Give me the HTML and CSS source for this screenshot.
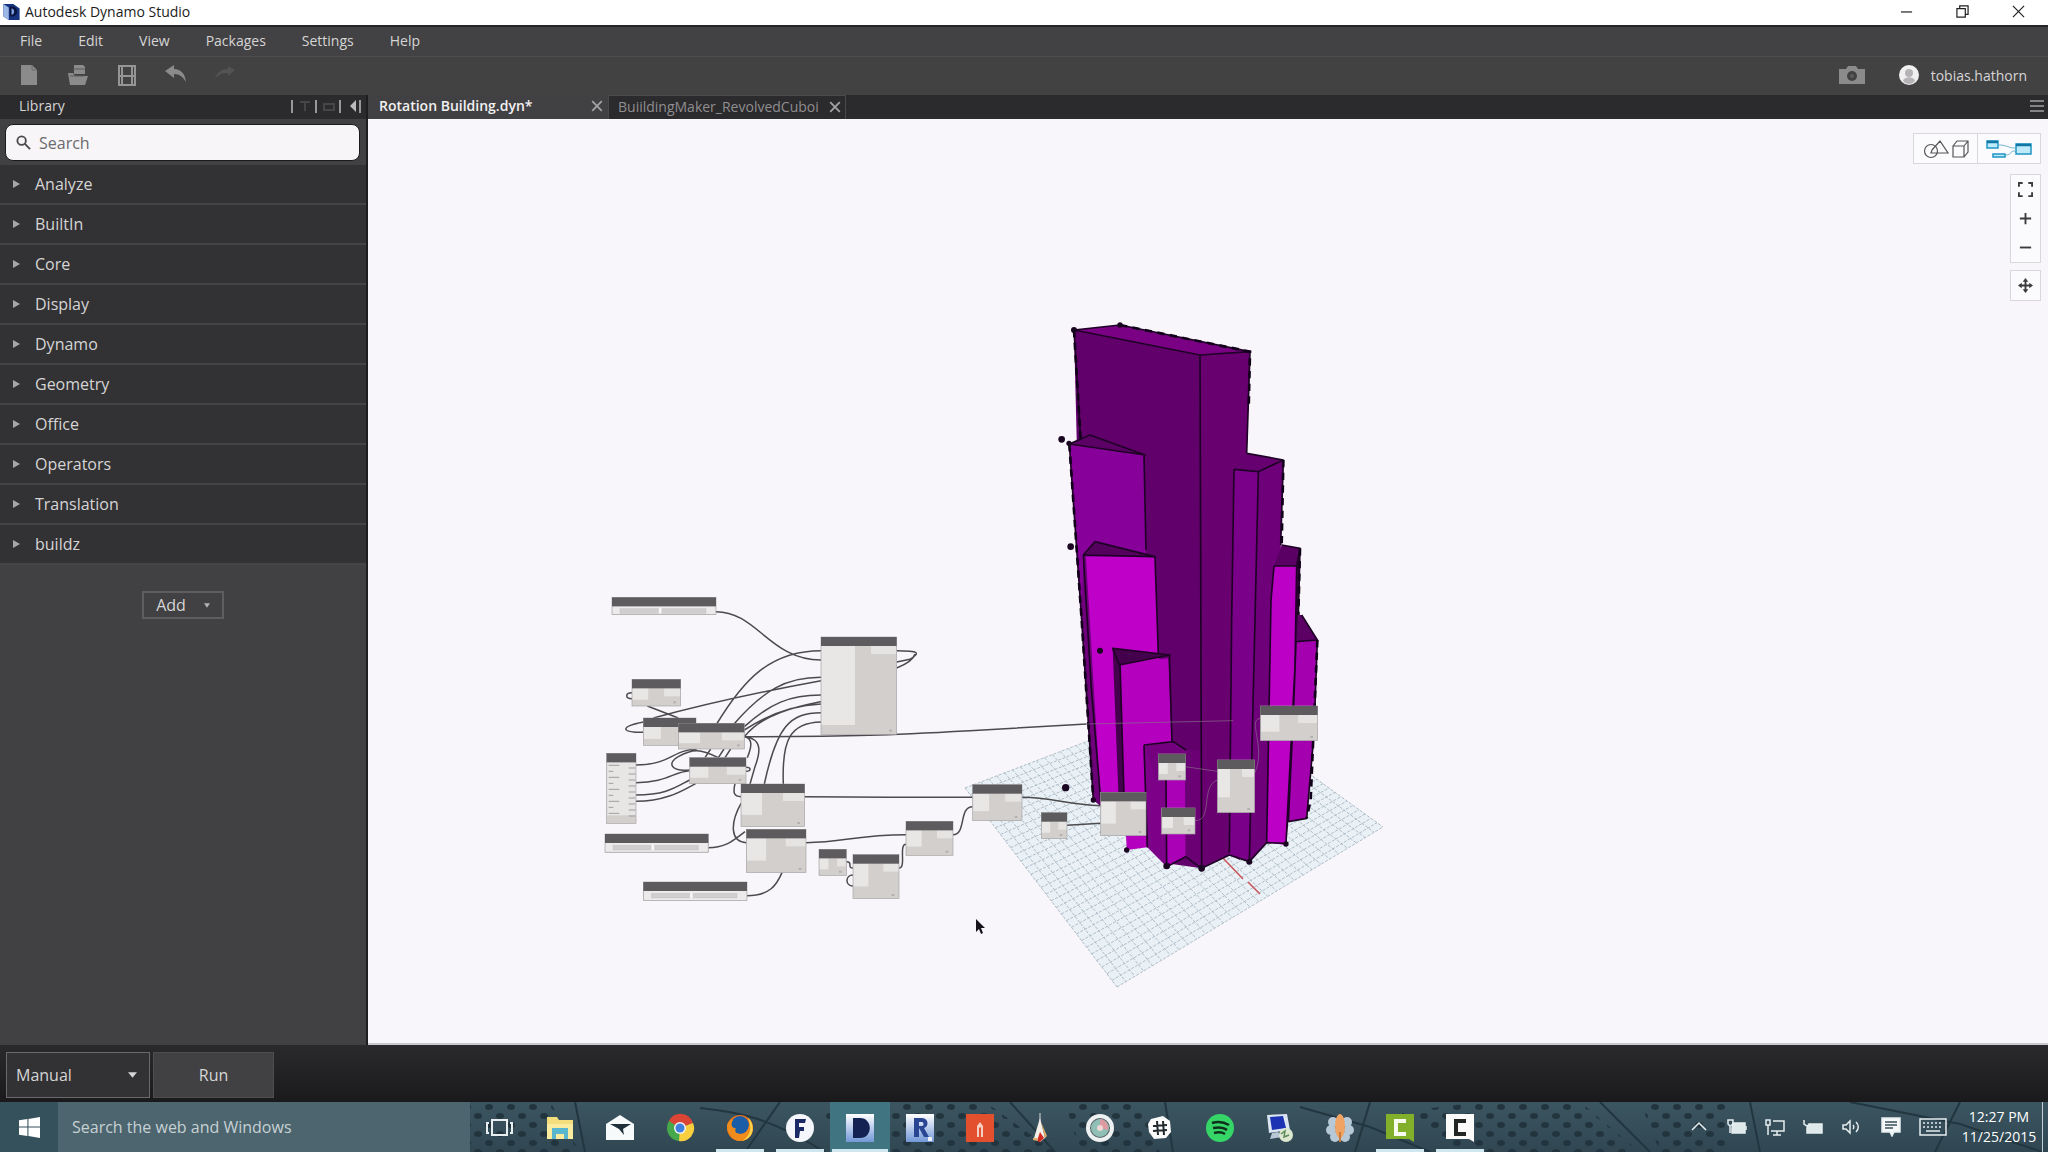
FILE: index.html
```html
<!DOCTYPE html>
<html lang="en">
<head>
<meta charset="UTF-8" />
<meta name="viewport" content="width=device-width, initial-scale=1.0"/>
<title>Autodesk Dynamo Studio</title>
<link rel="stylesheet" href="styles.css">
</head>
<body>

<header class="titlebar">
  <svg class="app-logo" viewBox="0 0 20 20"><path d="M1 1h11l7 5v13H7L1 15z" fill="#16337f"/><path d="M1 1v14l6 4V5z" fill="#9db8e6"/><path d="M8 4h3c7 0 7 11 0 11H8z" fill="#0a1440"/><path d="M10 6c4 0 4 7 0 7z" fill="#7fa0e0"/></svg>
  <h1>Autodesk Dynamo Studio</h1>
  <div class="window-buttons">
    <button aria-label="Minimize"><svg viewBox="0 0 14 14"><path d="M1 7.5h12"/></svg></button>
    <button aria-label="Restore"><svg viewBox="0 0 14 14"><path d="M1 4h9v9H1zM4 4V1h9v9h-3"/></svg></button>
    <button aria-label="Close"><svg viewBox="0 0 14 14"><path d="M1 1l12 12M13 1L1 13"/></svg></button>
  </div>
</header>

<nav class="menubar">
  <button>File</button>
  <button>Edit</button>
  <button>View</button>
  <button>Packages</button>
  <button>Settings</button>
  <button>Help</button>
</nav>

<div class="toolbar">
  <button aria-label="New"><svg viewBox="0 0 24 24"><path d="M4 2h11l5 5v15H4z" fill="#8c8b8c"/><path d="M15 2v5h5" fill="none" stroke="#6b6a6b"/></svg></button>
  <button aria-label="Open"><svg viewBox="0 0 24 24"><path d="M8 2h9l2 2v7H8zM2 10h5l2 3h13l-3 9H4z" fill="#8c8b8c"/><path d="M7 6h12M4 13h14" stroke="#5d5c5d"/></svg></button>
  <button aria-label="Save"><svg viewBox="0 0 24 24"><path d="M4 3h16v19H4zM4 13h16M7 3v19M17 3v19" fill="none" stroke="#969596" stroke-width="2"/></svg></button>
  <button aria-label="Undo"><svg viewBox="0 0 24 24"><path d="M1 8l9-6v4c7 0 11 5 12 13-3-5-6-8-12-8v4z" fill="#8c8b8c"/></svg></button>
  <button aria-label="Redo"><svg viewBox="0 0 24 24"><path d="M22 7l-7-4v3C8 6 4 9 2 16c4-5 7-6 13-6v3z" fill="#545354"/></svg></button>
  <div class="account">
    <button aria-label="Export as image"><svg viewBox="0 0 26 20"><path d="M0 4h7l2-3h8l2 3h7v15H0z" fill="#8c8b8c"/><circle cx="13" cy="11" r="5" fill="#434243"/><circle cx="13" cy="11" r="2" fill="#5d5c5d"/></svg></button>
    <button class="user"><svg viewBox="0 0 20 20"><circle cx="10" cy="10" r="10" fill="#f1f0f1"/><circle cx="10" cy="8" r="4" fill="#b5b3b5"/><path d="M4 16c1-5 11-5 12 0-3 4-9 4-12 0z" fill="#b5b3b5"/></svg><span>tobias.hathorn</span></button>
  </div>
</div>

<main class="workspace">
  <aside class="library">
    <div class="library-head">
      <h2>Library</h2>
      <svg viewBox="0 0 72 16"><path d="M2 2v13M26 2v13M50 2v13M70 2v13" stroke="#bdbcbd" stroke-width="1.5"/><path d="M10 4h10M15 4v9M34 6h10v6H34z" stroke="#464547" stroke-width="2" fill="none"/><path d="M66 2v12l-6-6z" fill="#bdbcbd"/></svg>
    </div>
    <label class="search">
      <svg viewBox="0 0 16 16"><circle cx="6" cy="6" r="4.5"/><path d="M9.5 9.5L15 15"/></svg>
      <input type="text" placeholder="Search" aria-label="Search library">
    </label>
    <ul class="categories">
      <li><button>Analyze</button></li>
      <li><button>BuiltIn</button></li>
      <li><button>Core</button></li>
      <li><button>Display</button></li>
      <li><button>Dynamo</button></li>
      <li><button>Geometry</button></li>
      <li><button>Office</button></li>
      <li><button>Operators</button></li>
      <li><button>Translation</button></li>
      <li><button>buildz</button></li>
    </ul>
    <button class="add">Add <svg viewBox="0 0 8 6"><path d="M0 0h8L4 6z"/></svg></button>
  </aside>

  <section class="editor">
    <div class="tabs">
      <div class="tab active"><button class="name">Rotation Building.dyn*</button><button class="close" aria-label="Close tab"><svg viewBox="0 0 10 10"><path d="M1 1l8 8M9 1L1 9"/></svg></button></div>
      <div class="tab"><button class="name">BuiildingMaker_RevolvedCuboi</button><button class="close" aria-label="Close tab"><svg viewBox="0 0 10 10"><path d="M1 1l8 8M9 1L1 9"/></svg></button></div>
      <button class="tab-list" aria-label="All tabs"><svg viewBox="0 0 14 12"><path d="M0 1h14M0 6h14M0 11h14"/></svg></button>
    </div>

    <div class="canvas">
      <svg class="scene" viewBox="368 119 1680 926" preserveAspectRatio="xMidYMid meet">
        <!-- ground plane -->
        <polygon points="965,788 1203,697 1383,827 1117,987" fill="#e9f1f6"/>
        <g id="grid"></g>
        <path d="M1223 858l20 21M1248 882l12 12" stroke="#c9565a" stroke-width="1.6"/>

        <!-- tower -->
        <g class="tower" transform="translate(1040 300) scale(.33333)">
          <polygon points="102,90 480,165 485,1705 380,1690 160,1500 122,900" fill="#61006a"/>
          <polygon points="480,165 630,155 620,480 600,1680 568,1665 485,1705" fill="#68006f"/>
          <polygon points="102,90 240,75 630,155 480,165" fill="#7a0084"/>

          <polygon points="582,508 655,515 645,960 628,1685 568,1665 575,960" fill="#7b0089"/>
          <polygon points="655,515 730,480 722,760 693,900 680,1628 628,1685 645,960" fill="#6e007a"/>
          <polygon points="620,460 730,480 655,515 582,508" fill="#660070"/>

          <polygon points="770,800 780,745 775,1000 768,1200 745,1565 738,1635" fill="#3c0045"/>
          <polygon points="702,798 770,800 764,1100 738,1635 680,1628 693,900" fill="#bd00c6"/>
          <polygon points="725,735 780,745 770,800 702,798" fill="#5a0064"/>
          <polygon points="768,1025 832,1020 822,1300 800,1555 745,1565 760,1250" fill="#a500b0"/>
          <polygon points="775,945 785,945 832,1020 768,1025" fill="#5c0066"/>

          <polygon points="88,432 312,465 318,760 250,1480 160,1500 125,960" fill="#87009a"/>
          <polygon points="88,432 150,405 315,465" fill="#5b0064"/>
          <polygon points="130,765 138,770 182,1500 160,1500 125,960" fill="#6e007a"/>
          <polygon points="138,770 345,772 355,1060 390,1330 245,1480 182,1500" fill="#be00c8"/>
          <polygon points="130,765 165,725 345,770" fill="#55005e"/>
          <polygon points="218,1045 240,1090 252,1500 235,1475" fill="#44004c"/>
          <polygon points="240,1090 385,1075 395,1330 322,1642 260,1650 252,1475" fill="#b400be"/>
          <polygon points="218,1045 390,1065 238,1095" fill="#45004d"/>
          <polygon points="312,1340 378,1390 380,1700 322,1642" fill="#7c0088"/>
          <polygon points="378,1390 435,1370 437,1670 380,1700" fill="#aa00b6"/>
          <polygon points="437,1350 485,1350 485,1705 437,1670" fill="#6a0074"/>
          <polygon points="312,1335 400,1325 438,1350 438,1440 350,1440" fill="#740080"/>

          <path class="edges" d="M102 90l138-15 390 80-150 10zM480 165l5 1540M630 155l-10 305M102 90l20 330M388 1065l8 260M355 1060l-10-290M312 465l6 285M88 432l37 528 35 540M582 508l-7 450-7 700M655 515l-10 445-17 725M693 900l-13 725M702 798l-9 102M770 800l-5 300-27 530M832 1020l-10 280-22 255-55 10M768 1025l-8 220-15 320M130 765l24 400 28 335M312 1335l10 307M378 1440l2 260M620 460l110 20-8 255M582 508l73 7 75-35M725 735l55 10-5 200M702 798h68l10-53M785 945l47 75-64 5M88 432l62-27 165 60zM130 765l35-40 180 45zM218 1045l172 20-152 30zM312 1335l88-10 38 25M240 1090l12 400M380 1700l57-30 48 35 83-40 60 20 52-57 58 2"/>
          <path class="dashes" d="M102 90l20 330M88 432l37 528 35 540M240 75l390 80-4 170M730 480l-5 255M780 745l-5 200M832 1020l-20 480-12 55"/>
          <g fill="#1a0620">
            <circle cx="102" cy="90" r="9"/><circle cx="240" cy="75" r="8"/><circle cx="65" cy="418" r="10"/><circle cx="87" cy="430" r="8"/><circle cx="92" cy="740" r="10"/><circle cx="180" cy="1052" r="9"/><circle cx="77" cy="1463" r="11"/>
            <circle cx="160" cy="1500" r="8"/><circle cx="260" cy="1650" r="8"/><circle cx="380" cy="1698" r="10"/><circle cx="485" cy="1705" r="10"/><circle cx="628" cy="1685" r="9"/><circle cx="738" cy="1632" r="8"/>
          </g>
        </g>

        <!-- node graph -->
        <g transform="translate(590 580) scale(.33333)">
          <g class="wires">
            <path d="M378 95C500 95 540 240 693 240M380 432C460 300 540 212 693 212M432 432C520 330 590 292 693 292M190 414C350 370 540 330 693 302M463 440C540 370 600 345 693 345M463 450C540 400 620 375 693 372M463 470C520 400 620 380 693 365M523 612C560 440 600 398 693 398M580 612C575 480 600 428 693 426"/>
            <path d="M920 212C990 212 990 218 960 238L920 246M975 222C970 240 940 256 920 264M126 338C105 338 105 356 126 356M172 378L265 414M160 426C90 440 90 457 160 457"/>
            <path d="M138 555C240 555 250 508 320 508M138 608C230 608 250 575 299 572M138 645C230 645 260 620 299 600M138 664C230 664 280 630 318 610M299 570C235 575 235 545 265 530C310 505 330 507 385 533M345 533L362 507M385 533L402 507M405 533L422 507"/>
            <path d="M463 470C490 475 485 500 472 533M463 470C520 475 510 520 495 560L480 612M468 562C484 562 484 574 468 574M435 611C428 640 433 650 453 650M453 670C420 730 420 785 469 788M355 803C410 803 430 780 465 755M471 947C540 947 560 915 576 878M463 470C800 470 900 465 1140 452L1490 432"/>
            <path d="M644 650L900 652H1148M648 788C760 788 800 764 948 764M769 845C790 845 770 864 789 864M789 885C765 885 765 918 789 918M927 864C950 864 925 793 948 793M1089 764C1130 764 1105 680 1148 680M1296 652C1390 652 1430 675 1532 677M1431 736L1532 730"/>
            <path d="M1490 432L1930 422M1785 560L1882 574M1816 722C1870 722 1830 620 1882 600M1994 580C2030 500 1970 420 2011 415" stroke="#86708a" stroke-width="2"/>
          </g>
          <g id="nodes"></g>
        </g>

        <path d="M976 919v13l3-3 2 5 2-1-2-5h4z" fill="#16141a"/>
      </svg>

      <div class="canvas-tools">
        <div class="view-switch">
          <button aria-label="Geometry view"><svg viewBox="0 0 46 20" fill="none" stroke="#555" stroke-width="1.2"><circle cx="8" cy="12" r="6.5"/><path d="M9 11l8-9 8 12H8zM30 7h11v11H30zM30 7l4-5h11v11l-4 5M41 7l4-5"/></svg></button>
          <button aria-label="Graph view"><svg viewBox="0 0 46 20"><path d="M1 2h11v7H1zM30 5h15v10H30zM7 15h12v3H7z" fill="#bfeafa" stroke="#1f95c4" stroke-width="1.5"/><path d="M1 3h11M30 6h15" stroke="#0f77a6" stroke-width="2.5"/><path d="M13 6c8 0 9 3 16 3M20 16c5 0 4-4 9-4" fill="none" stroke="#6fb4cf"/></svg></button>
        </div>
        <div class="nav-group">
          <button aria-label="Zoom to fit"><svg viewBox="0 0 16 16"><path d="M1 5V1h4M11 1h4v4M15 11v4h-4M5 15H1v-4"/></svg></button>
          <button aria-label="Zoom in"><svg viewBox="0 0 16 16"><path d="M2 8h12M8 2v12"/></svg></button>
          <button aria-label="Zoom out"><svg viewBox="0 0 16 16"><path d="M2 8h12"/></svg></button>
        </div>
        <div class="nav-group">
          <button aria-label="Pan"><svg viewBox="0 0 16 16"><path d="M2 8h12M8 2v12"/><path d="M8 0l3 4H5zM8 16l3-4H5zM0 8l4-3v6zM16 8l-4-3v6z" class="solid"/></svg></button>
        </div>
      </div>
    </div>
  </section>
</main>

<div class="runbar">
  <div class="run-mode">
    <select aria-label="Run mode"><option>Manual</option><option>Automatic</option></select>
    <svg viewBox="0 0 10 6"><path d="M0 0h10L5 6z"/></svg>
  </div>
  <button class="run">Run</button>
</div>

<footer class="taskbar">
  <svg class="wallpaper" width="100%" height="100%">
    <defs>
      <pattern id="dots" width="22" height="18" patternUnits="userSpaceOnUse"><ellipse cx="5" cy="5" rx="4" ry="3"/><ellipse cx="16" cy="14" rx="4" ry="3"/></pattern>
    </defs>
    <g fill="url(#dots)"><path d="M470 0h80l30 50H470zM815 10l60-10h110l70 50H850zM1065 0h75l20 50h-80zM1400 10l80-10h100l60 50H1460zM1640 0h85v50h-65z"/></g>
    <path d="M575 0l10 50M700 6c40 4 70 10 125 44M780 0l-35 50M1010 0l45 50M1165 0l8 50M1300 5l70 20 60 25M1370 0l-15 50M1600 0l50 50M1750 0l10 50M1850 0l110 22 88 30M1960 0l-25 50"/>
  </svg>
  <button class="start" aria-label="Start"><svg viewBox="0 0 20 20"><path d="M0 3l8-1v7H0zM9 2l11-2v9H9zM0 10h8v8l-8-1zM9 10h11v10L9 18z" fill="#fff"/></svg></button>
  <input class="web-search" type="text" placeholder="Search the web and Windows" aria-label="Search the web and Windows">
  <div class="apps">
    <button aria-label="Task view"><svg viewBox="0 0 30 30"><path d="M7 7h15v15H7zM4 10H2v10h2M25 10h2v10h-2" fill="none" stroke="#e8eef0" stroke-width="2"/></svg></button>
    <button aria-label="File Explorer"><svg viewBox="0 0 30 30"><path d="M2 4h10l2 3h14v19H2z" fill="#f3dd7c"/><path d="M2 11h26v15H2z" fill="#faeb9e"/><path d="M7 26V15h16v11h-4v-5h-8v5z" fill="#58b6cf"/></svg></button>
    <button aria-label="Mail"><svg viewBox="0 0 30 30"><path d="M1 11L15 2l14 9v16H1z" fill="#f7fafb"/><path d="M5 11h21l-8 5 1 6-5-6z" fill="#20303a"/></svg></button>
    <button aria-label="Chrome"><svg viewBox="0 0 30 30"><circle cx="15" cy="15" r="13" fill="#46a84a"/><path d="M15 15L4 8a13 13 0 0 1 24 2z" fill="#dc4436"/><path d="M15 15l13-5a13 13 0 0 1-14 18z" fill="#f8cf3e"/><circle cx="15" cy="15" r="6" fill="#f2f2f2"/><circle cx="15" cy="15" r="4.5" fill="#3f7fe0"/></svg></button>
    <button class="open" aria-label="Firefox"><svg viewBox="0 0 30 30"><circle cx="15" cy="15" r="13" fill="#e8761c"/><circle cx="15" cy="12" r="9" fill="#1c5da8"/><path d="M2 12c0 9 6 16 13 16 9 0 13-7 13-13 0-5-3-9-5-10 3 9-1 16-7 16-5 0-7-3-5-6-4 1-6-4-3-8-3 0-5 2-6 5z" fill="#f08c1c"/><path d="M23 5c5 4 6 12 3 17-2 3-5 5-9 6 9-5 10-14 6-23z" fill="#fbd24b"/></svg></button>
    <button class="open" aria-label="FormIt"><svg viewBox="0 0 30 30"><circle cx="15" cy="15" r="14" fill="#f4f6fb"/><path d="M10 6h11l-1 4h-6v4h5v4h-4l-1 7h-4z" fill="#1b2a66"/></svg></button>
    <button class="open current" aria-label="Dynamo Studio"><svg viewBox="0 0 30 30"><defs><linearGradient id="blue" x2="0" y2="1"><stop stop-color="#fff"/><stop offset="1" stop-color="#7398d8"/></linearGradient></defs><path d="M1 1h28v28H1z" fill="url(#blue)"/><path d="M8 5h7c13 0 13 20 0 20H8z" fill="#132252"/></svg></button>
    <button aria-label="Revit"><svg viewBox="0 0 30 30"><path d="M1 1h28v28H1z" fill="url(#blue)"/><path d="M9 5h8c7 0 7 9 2 10l5 9h-5l-5-9v9H9zM14 9v4h3c2 0 2-4 0-4z" fill="#2a4692" fill-rule="evenodd"/><path d="M23 24h4v4h-4z" fill="#eef2fa"/></svg></button>
    <button aria-label="Navigator"><svg viewBox="0 0 30 30"><path d="M1 1h28v28H1z" fill="#e2502e"/><path d="M12 24V13l3-4 3 4v11h-2V14l-2 1v9z" fill="#f4cfc2"/></svg></button>
    <button aria-label="Rocket"><svg viewBox="0 0 30 30"><path d="M15 0v8" stroke="#d7dadd"/><path d="M15 5l5 20-5 4-6-4z" fill="#f4efe8"/><path d="M15 19l4 6-4 4-3-1z" fill="#d12a20"/><path d="M8 25h4l1 3-5-1zM16 9l4 16 2-2z" fill="#dfae6b"/></svg></button>
    <button aria-label="Camera"><svg viewBox="0 0 30 30"><circle cx="15" cy="15" r="14" fill="#eef1f1"/><circle cx="15" cy="15" r="10" fill="#596468"/><circle cx="15" cy="15" r="9" fill="#8fbfb5"/><path d="M15 6a9 9 0 0 1 8 11l-8-2z" fill="#dd9aa0"/><circle cx="15" cy="15" r="3" fill="#f1d6d6"/></svg></button>
    <button aria-label="Slack"><svg viewBox="0 0 30 30"><path d="M6 6l12-3 7 5 1 11-5 6-12 1-5-7-1-8z" fill="#fbfbfb"/><path d="M12 8l1 14M18 8l1 14M8 13l14-1M8 18l14-1" stroke="#22292d" stroke-width="2"/></svg></button>
    <button aria-label="Spotify"><svg viewBox="0 0 30 30"><circle cx="15" cy="15" r="14" fill="#35d567"/><path d="M7 10c6-2 12-1 17 2M8 15c5-1 10-1 14 2M9 20c4-1 8-1 11 1" fill="none" stroke="#10301c" stroke-width="2.5"/></svg></button>
    <button aria-label="Remote Desktop"><svg viewBox="0 0 30 30"><path d="M2 2l20-1 3 16-21 3z" fill="#dce6f2"/><path d="M5 4l13-1 3 12-14 2z" fill="#1c34b4"/><path d="M7 20l6-1 4 5-12 2z" fill="#b8c6d6"/><circle cx="21" cy="22" r="7" fill="#dbe7cf"/><path d="M16 21l4-3-1 6 5-2" fill="none" stroke="#5d8a58" stroke-width="1.5"/></svg></button>
    <button aria-label="Flower"><svg viewBox="0 0 30 30"><g fill="#b7c8d6"><circle cx="8" cy="9" r="5"/><circle cx="22" cy="9" r="5"/><circle cx="6" cy="17" r="5"/><circle cx="24" cy="17" r="5"/><circle cx="10" cy="24" r="5"/><circle cx="20" cy="24" r="5"/></g><ellipse cx="15" cy="13" rx="5" ry="12" fill="#f0a362"/><path d="M15 19v10" stroke="#c87a3c" stroke-width="2"/></svg></button>
    <button class="open" aria-label="Camtasia"><svg viewBox="0 0 30 30"><path d="M1 1h28v28l-5-3H1z" fill="#83b02b"/><path d="M21 8H11v13h10" fill="none" stroke="#f7faef" stroke-width="4"/></svg></button>
    <button class="open" aria-label="Camtasia Recorder"><svg viewBox="0 0 30 30"><path d="M1 1h28v28l-5-3H1z" fill="#fbfcfa"/><path d="M21 8H11v13h10" fill="none" stroke="#222724" stroke-width="4"/></svg></button>
  </div>
  <div class="tray">
    <button aria-label="Show hidden icons"><svg viewBox="0 0 20 20"><path d="M3 13l7-7 7 7"/></svg></button>
    <button aria-label="Power"><svg viewBox="0 0 20 20"><path d="M6 6h12v10H5v-5z" fill="#dfe8ea"/><path d="M1 3v4l2 2 3-2V3zM3 9v7M19 9v4"/></svg></button>
    <button aria-label="Display"><svg viewBox="0 0 20 20"><path d="M8 4h11v10H6M12 14v4M8 18h8M1 3h4v5H1zM3 8v10"/></svg></button>
    <button aria-label="Drive"><svg viewBox="0 0 20 20"><path d="M6 7h13v9H4v-5z" fill="#dfe8ea"/><path d="M1 3v4l3 2 3-2"/></svg></button>
    <button aria-label="Volume"><svg viewBox="0 0 20 20"><path d="M2 8h3l4-4v12l-4-4H2zM12 8c1 1 1 3 0 4M15 5c3 3 3 7 0 10"/></svg></button>
    <button class="notify" aria-label="Notifications"><svg viewBox="0 0 20 20"><path d="M1 1h18v14h-6l-2 4-2-4H1z" fill="#f4f8f9"/><path d="M4 5h12M4 8h12M4 11h8" stroke="#3a4f59"/></svg></button>
    <button class="keyboard" aria-label="Touch keyboard"><svg viewBox="0 0 28 20"><path d="M1 2h26v16H1z"/><path d="M4 6h20M4 10h20" stroke-dasharray="2 2"/><path d="M7 14h14"/></svg></button>
    <time class="clock"><span>12:27 PM</span><span>11/25/2015</span></time>
  </div>
</footer>

<script src="script.js"></script>
</body>
</html>
```
FILE: styles.css
```css
* {
  box-sizing: border-box;
}

body {
  margin: 0;
  height: 100vh;
  display: flex;
  flex-direction: column;
  overflow: hidden;
  background: #414042;
  color: #d6d5d6;
  font-family: "Open Sans", "Noto Sans", sans-serif;
  font-size: 16px;
}

button, input, select {
  font: inherit;
  color: inherit;
  background: none;
  border: 0;
  padding: 0;
  margin: 0;
}

button {
  display: flex;
  align-items: center;
  justify-content: center;
  cursor: pointer;
}

h1, h2 {
  margin: 0;
  font-weight: 400;
}

svg {
  display: block;
  flex: none;
}

/* title bar */

.titlebar {
  flex: none;
  display: flex;
  align-items: center;
  height: 25px;
  padding: 0 2px 2px;
  background: #fff;
  color: #1c1c1c;
}

.app-logo {
  width: 19px;
  height: 18px;
  margin-right: 4px;
}

.titlebar h1 {
  font-size: 14px;
  line-height: 22px;
}

.window-buttons {
  display: flex;
  margin-left: auto;
}

.window-buttons button {
  width: 56px;
  height: 22px;
}

.window-buttons svg {
  width: 13px;
  height: 13px;
  fill: none;
  stroke: #222;
  stroke-width: 1.3;
}

/* menus */

.menubar {
  flex: none;
  display: flex;
  gap: 36px;
  height: 31px;
  padding: 0 20px 3px;
  border-top: 2px solid #262527;
  background: #424143;
  font-size: 14px;
}

.toolbar {
  flex: none;
  display: flex;
  align-items: center;
  gap: 25px;
  height: 39px;
  padding: 0 21px 2px 17px;
  border-top: 1px solid #4e4d4f;
  background: #434243;
}

.toolbar svg {
  width: 24px;
  height: 24px;
}

.account {
  display: flex;
  align-items: center;
  gap: 34px;
  margin-left: auto;
  font-size: 14px;
}

.account svg {
  width: 26px;
  height: 20px;
}

.account .user {
  gap: 12px;
}

.account .user svg {
  width: 20px;
}

/* library */

.workspace {
  flex: 1;
  min-height: 0;
  display: flex;
}

.library {
  flex: none;
  width: 368px;
  border-right: 2px solid #1e1d1f;
}

.library-head {
  display: flex;
  align-items: center;
  justify-content: space-between;
  height: 24px;
  padding: 0 4px 2px 19px;
  background: #2b2a2c;
}

.library-head h2 {
  font-size: 14px;
  line-height: 22px;
}

.library-head svg {
  width: 72px;
  height: 16px;
}

.search {
  display: flex;
  align-items: center;
  gap: 8px;
  height: 37px;
  margin: 5px 6px 4px 5px;
  padding: 0 10px;
  border: 1px solid #1b1a1c;
  border-radius: 8px;
  background: #f7f5f8;
}

.search svg {
  width: 15px;
  height: 15px;
  fill: none;
  stroke: #4a494b;
  stroke-width: 2;
}

.search input {
  flex: 1;
  outline: none;
  color: #333;
}

.search input::placeholder {
  color: #6b6a6c;
  opacity: 1;
}

.categories {
  margin: 0;
  padding: 0;
  list-style: none;
}

.categories button {
  justify-content: flex-start;
  gap: 15px;
  width: 100%;
  height: 40px;
  padding-left: 13px;
  border-bottom: 2px solid #454446;
  background: #323133;
}

.categories button::before {
  content: "";
  border-left: 7px solid #a9a8a9;
  border-top: 4px solid transparent;
  border-bottom: 4px solid transparent;
}

.add {
  gap: 18px;
  width: 82px;
  height: 28px;
  margin: 26px auto 0;
  border: 2px solid #5e5d5f;
}

.add svg {
  width: 6px;
  height: 5px;
  fill: #b5b4b5;
}

/* tabs */

.editor {
  flex: 1;
  min-width: 0;
  display: flex;
  flex-direction: column;
}

.tabs {
  flex: none;
  display: flex;
  height: 24px;
  background: #2b2a2c;
}

.tab {
  display: flex;
  align-items: center;
  justify-content: space-between;
  width: 238px;
  padding: 0 4px 2px 9px;
  border: 1px solid #4a494b;
  border-bottom: 0;
  color: #8f8e90;
  font-size: 14px;
}

.tab.active {
  width: 240px;
  padding: 0 4px 4px 10px;
  background: #414042;
  border-color: #414042;
  color: #f2f1f2;
  font-weight: 600;
}

.tab svg {
  width: 12px;
  height: 12px;
  fill: none;
  stroke: #a3a2a4;
  stroke-width: 1.5;
}

.tab-list {
  margin-left: auto;
  padding: 0 4px 2px 0;
}

.tab-list svg {
  width: 14px;
  height: 12px;
  stroke: #a3a2a4;
  stroke-width: 1.5;
}

/* canvas */

.canvas {
  flex: 1;
  min-height: 0;
  position: relative;
  background: #f8f6fa;
  box-shadow: inset 0 -2px #c9c8ca;
}

.scene {
  width: 100%;
  height: 100%;
}

#grid path {
  fill: none;
  stroke: #a0aebb;
  stroke-width: 0.8;
  stroke-dasharray: 3 1.5;
}

.edges {
  fill: none;
  stroke: #1f0026;
  stroke-width: 5;
  stroke-linejoin: round;
}

.dashes {
  fill: none;
  stroke: #12001a;
  stroke-width: 8;
  stroke-dasharray: 22 16;
}

.wires {
  fill: none;
  stroke: #4c4a4d;
  stroke-width: 4.5;
}

.canvas-tools {
  position: absolute;
  top: 14px;
  right: 7px;
  display: flex;
  flex-direction: column;
  align-items: flex-end;
}

.view-switch,
.nav-group {
  display: flex;
  border: 1px solid #d9d7db;
  background: #fbfafc;
}

.view-switch button {
  width: 63px;
  height: 29px;
}

.view-switch button + button {
  border-left: 1px solid #d9d7db;
}

.view-switch svg {
  width: 46px;
  height: 20px;
}

.nav-group {
  flex-direction: column;
  margin-top: 10px;
}

.nav-group + .nav-group {
  margin-top: 7px;
}

.nav-group button {
  width: 29px;
  height: 29px;
}

.nav-group svg {
  width: 15px;
  height: 15px;
  fill: none;
  stroke: #3c3b3d;
  stroke-width: 2;
}

.nav-group .solid {
  fill: #3c3b3d;
  stroke: none;
}

/* run bar */

.runbar {
  flex: none;
  display: flex;
  gap: 3px;
  height: 57px;
  padding: 7px 6px 4px;
  background: linear-gradient(#2a292b, #1a191b);
}

.run-mode {
  position: relative;
  width: 144px;
  border: 1px solid #6a696b;
  background: #323133;
}

.run-mode select {
  width: 100%;
  height: 100%;
  padding-left: 9px;
  appearance: none;
}

.run-mode svg {
  position: absolute;
  right: 12px;
  top: 50%;
  width: 9px;
  height: 6px;
  margin-top: -3px;
  fill: #d6d5d6;
  pointer-events: none;
}

.run {
  width: 121px;
  border: 1px solid #4e4d4f;
  background: #414042;
}

/* taskbar */

.taskbar {
  flex: none;
  position: relative;
  display: flex;
  height: 50px;
  background: linear-gradient(#3b5561, #304752);
  color: #fff;
}

.taskbar > * {
  position: relative;
}

.taskbar .wallpaper {
  position: absolute;
  inset: 0;
}

#dots {
  fill: #22353f;
}

.wallpaper > path {
  fill: none;
  stroke: #223640;
  stroke-width: 2;
}

.start {
  width: 58px;
  background: #35515b;
}

.start svg {
  width: 21px;
  height: 21px;
}

.web-search {
  width: 412px;
  padding-left: 14px;
  background: #4d656e;
}

.web-search::placeholder {
  color: #c6d1d5;
  opacity: 1;
}

.apps {
  display: flex;
}

.apps button {
  width: 60px;
  padding-top: 2px;
}

.apps .open {
  background: linear-gradient(#cfe8f0, #cfe8f0) center bottom / 48px 3px no-repeat;
}

.apps .current {
  background: linear-gradient(#cfe8f0, #cfe8f0) center bottom / 56px 3px no-repeat #3f7480;
}

.apps svg {
  width: 30px;
  height: 30px;
}

.tray {
  display: flex;
  align-items: center;
  height: 100%;
  margin-left: auto;
  margin-right: 5px;
  border-right: 1px solid #c3ced2;
}

.tray button {
  width: 38px;
  height: 50px;
}

.tray .notify,
.tray .keyboard {
  width: 42px;
}

.tray svg {
  width: 20px;
  height: 20px;
  fill: none;
  stroke: #e6edef;
  stroke-width: 1.5;
}

.tray .keyboard svg {
  width: 28px;
}

.clock {
  display: flex;
  flex-direction: column;
  align-items: center;
  width: 82px;
  margin: 0 2px 0 4px;
  font-size: 14px;
  line-height: 20px;
}
```
FILE: script.js
```js
const svgNS = "http://www.w3.org/2000/svg";

function add(parent, tag, attrs) {
  const el = document.createElementNS(svgNS, tag);
  for (const key in attrs) el.setAttribute(key, attrs[key]);
  parent.appendChild(el);
  return el;
}

// ground plane: lines between opposite sides
const left = [965, 788], top_ = [1203, 697], right = [1383, 827], bottom = [1117, 987];
const mix = (a, b, t) => [a[0] + (b[0] - a[0]) * t, a[1] + (b[1] - a[1]) * t];
const grid = document.getElementById("grid");
let d = "";
for (let i = 0; i <= 30; i++) {
  const t = i / 30;
  d += `M${mix(left, top_, t)}L${mix(bottom, right, t)}`;
  d += `M${mix(left, bottom, t)}L${mix(top_, right, t)}`;
}
add(grid, "path", { d });

// x, y, width, height, kind
const nodes = [
  [66, 52, 312, 52, "slider"],
  [126, 298, 146, 80],
  [160, 414, 158, 82],
  [265, 430, 198, 77],
  [50, 520, 88, 210, "list"],
  [299, 533, 169, 78],
  [693, 171, 227, 292, "tall"],
  [453, 612, 191, 128],
  [469, 748, 179, 130],
  [45, 762, 310, 55, "slider"],
  [160, 906, 311, 56, "slider"],
  [687, 808, 82, 78],
  [789, 824, 138, 132],
  [948, 724, 141, 102],
  [1148, 614, 148, 108],
  [1354, 698, 77, 78],
  [1532, 637, 136, 130],
  [1705, 522, 82, 78],
  [1715, 684, 100, 78],
  [1882, 540, 112, 158],
  [2011, 378, 172, 104]
];

const layer = document.getElementById("nodes");

nodes.forEach(([x, y, w, h, kind]) => {
  const head = 27;
  add(layer, "rect", { x, y, width: w, height: h, fill: "#d2cfcd", stroke: "#a5a3a5", "stroke-width": 2 });

  if (kind === "slider") {
    add(layer, "rect", { x: x + 2, y: y + head, width: w - 4, height: h - head - 2, fill: "#eceaea" });
    add(layer, "rect", { x: x + 24, y: y + head + 7, width: w - 54, height: 14, fill: "#d0cecf", stroke: "#b9b7b9" });
    add(layer, "rect", { x: x + w * 0.45, y: y + head + 5, width: 8, height: 17, fill: "#f7f5f6" });
  } else if (kind === "list") {
    add(layer, "rect", { x: x + 2, y: y + head, width: w - 4, height: h - head - 24, fill: "#e8e5e5" });
    for (let i = 0; i < 9; i++) {
      add(layer, "path", { d: `M${x + 6} ${y + 36 + i * 18}h${i % 2 ? 14 : 32}M${x + 66} ${y + 44 + i * 18}h20`, stroke: "#a09ea2", "stroke-width": 3 });
    }
  } else {
    const portH = kind === "tall" ? h - head - 28 : (h - head) * 0.65;
    add(layer, "rect", { x: x + 2, y: y + head, width: w * (kind === "tall" ? 0.44 : 0.32), height: portH, fill: "#e9e7e5" });
    add(layer, "rect", { x: x + w * 0.66, y: y + head, width: w * 0.34 - 2, height: 24, fill: "#e6e4e2" });
    add(layer, "rect", { x: x + w - 22, y: y + h - 14, width: 8, height: 6, fill: "#b3b0b0" });
  }

  add(layer, "rect", { x, y, width: w, height: head, fill: "#5d5b5d" });
});
```
